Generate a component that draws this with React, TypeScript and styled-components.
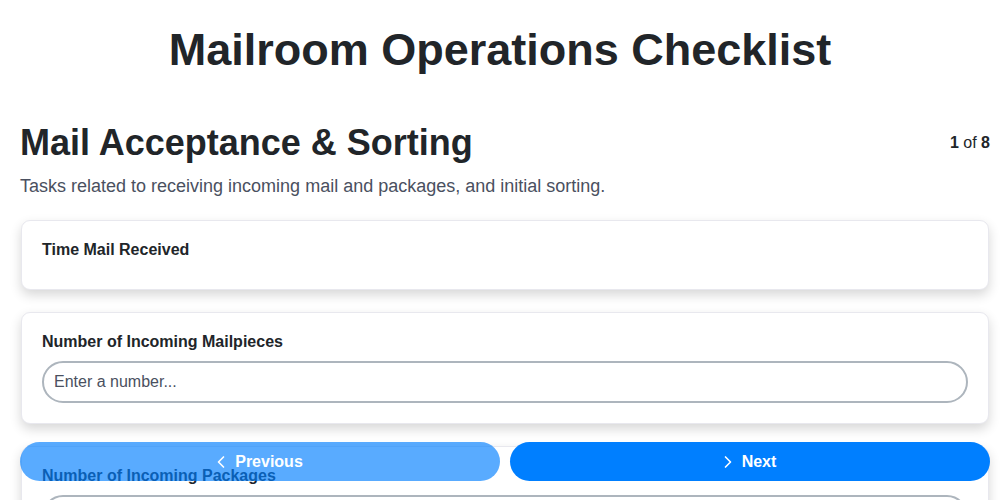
import React from "react";
import styled, { createGlobalStyle } from "styled-components";
import { ChevronLeft, ChevronRight } from "lucide-react";

const GlobalStyle = createGlobalStyle`
  html, body { margin: 0; padding: 0; background: #ffffff; }
  body { font-family: "Liberation Sans", Arial, sans-serif; color: #212529; }
  * { box-sizing: border-box; }
`;

const Header = styled.header`
  padding-top: 26px;
`;

const Title = styled.h1`
  font-size: 45px;
  font-weight: 700;
  text-align: center;
  margin: 0;
  line-height: 48px;
  color: #212529;
`;

const Main = styled.main`
  padding: 0 10px 120px 20px;
`;

const SectionHeader = styled.div`
  display: flex;
  justify-content: space-between;
  align-items: center;
  margin-top: 49px;
`;

const SectionTitle = styled.h2`
  font-size: 36px;
  font-weight: 700;
  margin: 0;
  line-height: 40px;
  color: #212529;
`;

const Counter = styled.div`
  font-size: 16px;
  color: #212529;
  b { font-weight: 700; }
`;

const Description = styled.p`
  font-size: 18px;
  color: #4a5060;
  margin: 12px 0 23px;
  line-height: 22px;
`;

const List = styled.div`
  display: flex;
  flex-direction: column;
  gap: 22px;
`;

const Card = styled.div`
  margin: 0 1px;
  background: #fff;
  border: 1px solid #e8e8ee;
  border-radius: 9px;
  box-shadow: 0 5px 12px rgba(0, 0, 0, 0.16);
  padding: 20px 20px 20px;
`;

const Label = styled.label`
  display: block;
  font-size: 16px;
  font-weight: 700;
  color: #212529;
  line-height: 18px;
  margin: 0 0 10px;
`;

const NumberInput = styled.input`
  display: block;
  width: 100%;
  height: 42px;
  border: 2px solid #adb5bd;
  border-radius: 21px;
  padding: 0 10px;
  font-family: "Liberation Sans", Arial, sans-serif;
  font-size: 16px;
  color: #212529;
  background: #fff;
  outline: none;
  &::placeholder { color: #4a5060; opacity: 1; }
`;

const Footer = styled.div`
  position: fixed;
  left: 20px;
  right: 10px;
  bottom: 19px;
  display: flex;
  gap: 10px;
`;

const NavButton = styled.button<{ $disabled?: boolean }>`
  flex: 1;
  height: 39px;
  border: none;
  border-radius: 20px;
  background: #007fff;
  color: #fff;
  font-family: "Liberation Sans", Arial, sans-serif;
  font-size: 16px;
  font-weight: 700;
  display: flex;
  align-items: center;
  justify-content: center;
  gap: 4px;
  padding: 0 6px 0 0;
  opacity: ${(p) => (p.$disabled ? 0.65 : 1)};
  cursor: pointer;
`;

const fields = [
  { label: "Time Mail Received", input: false },
  { label: "Number of Incoming Mailpieces", input: true },
  { label: "Number of Incoming Packages", input: true },
  { label: "Number of Misdirected Items", input: true },
];

export default function App() {
  return (
    <>
      <GlobalStyle />
      <Header>
        <Title>Mailroom Operations Checklist</Title>
      </Header>
      <Main>
        <SectionHeader>
          <SectionTitle>Mail Acceptance &amp; Sorting</SectionTitle>
          <Counter>
            <b>1</b> of <b>8</b>
          </Counter>
        </SectionHeader>
        <Description>
          Tasks related to receiving incoming mail and packages, and initial sorting.
        </Description>
        <List>
          {fields.map((f) => (
            <Card key={f.label}>
              <Label>{f.label}</Label>
              {f.input && <NumberInput type="number" placeholder="Enter a number..." />}
            </Card>
          ))}
        </List>
      </Main>
      <Footer>
        <NavButton $disabled>
          <ChevronLeft size={20} strokeWidth={2} />
          Previous
        </NavButton>
        <NavButton>
          <ChevronRight size={20} strokeWidth={2} />
          Next
        </NavButton>
      </Footer>
    </>
  );
}
